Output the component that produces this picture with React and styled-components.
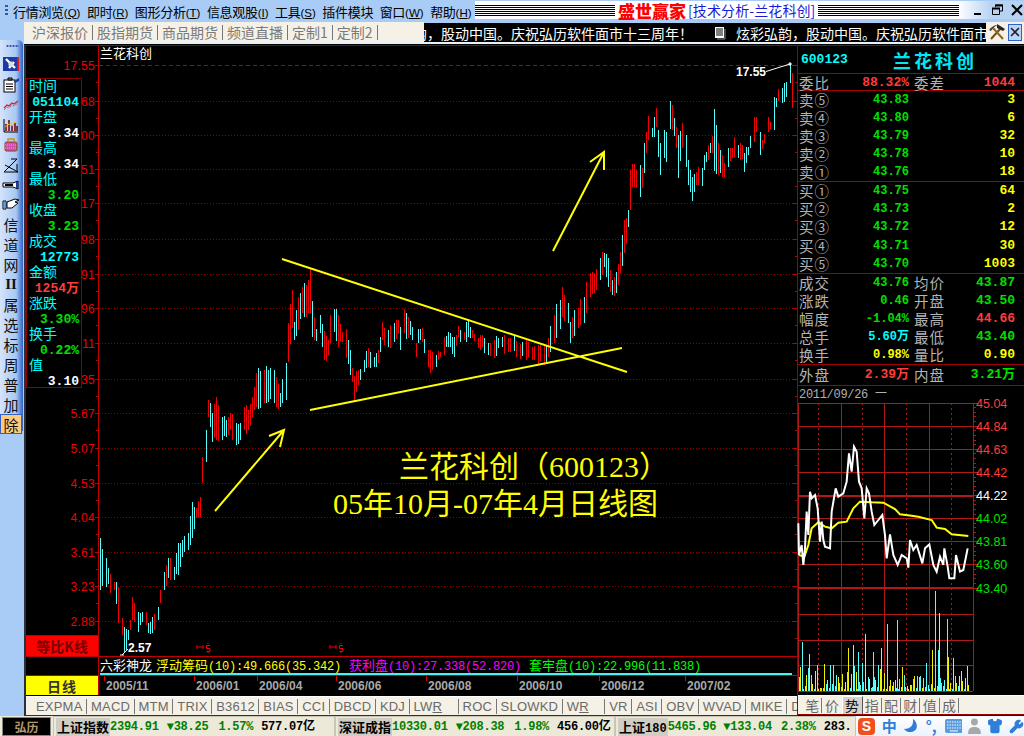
import React from "react";
import styled, { createGlobalStyle } from "styled-components";
import { Shirt, Wrench } from "lucide-react";

const CJK = `"Noto Sans CJK SC", "Liberation Sans", sans-serif`;
const SANS = `"Liberation Sans", "Noto Sans CJK SC", sans-serif`;
const MONO = `"Liberation Mono", "Noto Sans CJK SC", monospace`;
const GRID = "#a00000";

const rnd = (i) => {
  const v = Math.sin(i * 12.9898 + 4.1) * 43758.5453;
  return v - Math.floor(v);
};

// x, top, bottom of the daily bars, read off the chart by eye
const WAY = [
  [100,538,590],[105,558,587],[113,582,590],[118,587,623],[121,618,635],[123,627,653],[127,630,640],[129,620,630],
  [132,597,620],[134,603,622],[137,612,632],[142,612,622],[145,612,625],[148,623,633],[152,617,633],[157,607,620],
  [160,590,603],[163,572,590],[167,558,578],[170,558,580],[173,567,580],[177,543,575],[182,540,557],[187,533,550],
  [191,502,538],[195,508,518],[199,497,517],[202,457,483],[205,430,462],[207,400,417],[212,413,442],[216,397,440],
  [221,417,440],[226,420,437],[230,413,430],[235,423,445],[240,423,440],[243,407,430],[247,410,430],[251,397,417],
  [255,373,407],[263,370,403],[273,370,403],[280,393,407],[285,363,400],[288,323,362],[292,290,328],[294,322,340],
  [298,297,330],[302,287,313],[304,283,317],[308,280,313],[310,268,313],[312,301,337],[316,329,341],[319,315,333],
  [322,324,347],[323,331,360],[327,340,355],[330,315,343],[333,309,332],[338,315,347],[342,332,342],[345,329,358],
  [349,350,375],[351,368,382],[354,376,402],[358,370,385],[363,360,372],[368,348,367],[373,357,367],[378,350,363],
  [382,322,340],[387,330,347],[393,323,342],[397,320,333],[400,327,350],[403,309,333],[407,317,338],[412,327,340],
  [415,343,357],[418,329,343],[422,328,342],[427,350,367],[430,350,373],[435,355,367],[440,352,357],[443,337,355],
  [447,332,347],[454,337,357],[458,326,337],[463,332,340],[467,319,337],[472,330,338],[477,338,348],[482,335,347],
  [487,343,355],[493,340,358],[498,338,348],[510,338,352],[522,342,356],[534,346,360],[546,345,362],[553,315,343],
  [562,287,317],[567,303,323],[570,322,343],[577,308,328],[583,297,323],[589,273,297],[593,273,293],[599,258,280],
  [603,253,267],[607,258,287],[611,280,295],[615,272,293],[619,252,273],[623,220,253],[627,210,227],[629,170,210],
  [632,164,187],[636,170,188],[639,165,197],[642,168,188],[644,143,173],[648,116,140],[651,128,137],[653,117,137],
  [656,108,127],[658,130,157],[660,143,175],[663,130,158],[666,132,162],[669,101,129],[672,105,130],[676,127,148],
  [678,135,178],[682,123,148],[685,135,167],[688,160,185],[692,177,201],[696,172,185],[701,168,186],[703,155,170],
  [707,145,160],[711,136,153],[713,109,171],[717,143,175],[722,155,177],[724,163,177],[727,148,167],[732,148,158],
  [734,137,157],[737,145,158],[742,145,159],[743,153,172],[747,147,155],[750,136,148],[753,117,142],[756,117,132],
  [759,132,155],[762,140,149],[764,134,143],[767,117,132],[770,122,129],[773,97,130],[776,98,107],[778,89,101],
  [781,88,103],[783,83,102],[786,82,97],[789,63,83],[791,73,108],
];

// bars sit on a 2px grid so each one keeps a black gap beside it
const bars = (() => {
  let red = "";
  let cyan = "";
  const add = (x, top, bot, seed) => {
    const d = `M${Math.round(x / 2) * 2 + 0.5} ${Math.round(top)}V${Math.round(bot)}`;
    if (rnd(seed) > 0.48) red += d;
    else cyan += d;
  };
  WAY.forEach(([x, top, bot], i) => {
    const next = WAY[i + 1];
    if (next) {
      const steps = Math.floor((next[0] - x - 0.5) / 3);
      for (let k = 1; k <= steps; k++) {
        const f = k / (steps + 1);
        const seed = i * 7 + k;
        const t = top + (next[1] - top) * f + (rnd(seed + 300) - 0.5) * 8;
        const b = bot + (next[2] - bot) * f + (rnd(seed + 500) - 0.5) * 8;
        add(x + (next[0] - x) * f, t, b, seed + 700);
      }
    }
    add(x, top, bot, i);
  });
  return { red, cyan };
})();

const AXIS = [
  ["17.55", 65], ["68", 101], ["00", 135], ["51", 169], ["17", 203], ["98", 239], ["91", 274], ["96", 308], ["11", 343],
  ["35", 379], ["5.67", 413], ["5.07", 448], ["4.53", 483], ["4.04", 517], ["3.61", 552], ["3.23", 586], ["2.88", 621],
];

const INFO = [
  ["时间", "051104", "#00ffff"], ["开盘", "3.34", "#fff"], ["最高", "3.34", "#fff"], ["最低", "3.20", "#00e000"],
  ["收盘", "3.23", "#00e000"], ["成交", "12773", "#00ffff"], ["金额", "1254万", "#ff3c3c"], ["涨跌", "3.30%", "#00e000"],
  ["换手", "0.22%", "#00e000"], ["值", "3.10", "#fff"],
];

const DATES = [["2005/11", 105], ["2006/01", 195], ["2006/04", 258], ["2006/06", 337], ["2006/08", 427], ["2006/10", 518], ["2006/12", 600], ["2007/02", 686]];
const SELL = [["卖⑤", "43.83", "3"], ["卖④", "43.80", "6"], ["卖③", "43.79", "32"], ["卖②", "43.78", "10"], ["卖①", "43.76", "18"]];
const BUY = [["买①", "43.75", "64"], ["买②", "43.73", "2"], ["买③", "43.72", "12"], ["买④", "43.71", "30"], ["买⑤", "43.70", "1003"]];
const STATS = [
  ["成交", "43.76", "#00e000", "均价", "43.87", "#00e000"],
  ["涨跌", "0.46", "#00e000", "开盘", "43.50", "#00e000"],
  ["幅度", "-1.04%", "#00e000", "最高", "44.66", "#ff3c3c"],
  ["总手", "5.60万", "#00ffff", "最低", "43.40", "#00e000"],
  ["换手", "0.98%", "#ffff00", "量比", "0.90", "#ffff00"],
];
const MENU = [["行情浏览", "Q"], ["即时", "R"], ["图形分析", "T"], ["信息观股", "I"], ["工具", "S"], ["插件模块"], ["窗口", "W"], ["帮助", "H"]];
const TOPTABS = ["沪深报价", "股指期货", "商品期货", "频道直播", "定制1", "定制2"];
const INDICATORS = ["EXPMA", "MACD", "MTM", "TRIX", "B3612", "BIAS", "CCI", "DBCD", "KDJ", "LWR*", "ROC", "SLOWKD", "WR*", "VR", "ASI", "OBV", "WVAD", "MIKE", "D"];
const SIDETABS = ["笔", "价", "势", "指", "配", "财", "值", "成"];
const RAILTEXT = ["信", "道", "网", "II", "属", "选", "标", "周", "普", "加", "除"];

const TICK_LABELS = [
  ["45.04", 403, "#ff3c3c"], ["44.84", 426, "#ff3c3c"], ["44.63", 449, "#ff3c3c"], ["44.42", 472, "#ff3c3c"], ["44.22", 495, "#fff"],
  ["44.02", 518, "#00e000"], ["43.81", 541, "#00e000"], ["43.60", 564, "#00e000"], ["43.40", 588, "#00e000"],
];

const toPts = (list) => list.map(([x, y]) => `${795 + x / 3},${385 + y / 3}`).join(" ");
const PRICE = toPts([[10,415],[12,510],[20,480],[25,540],[30,490],[35,380],[40,450],[45,320],[50,340],[60,330],[68,370],[75,470],[80,410],[85,465],[90,485],[105,490],[110,380],[122,310],[130,335],[145,325],[155,290],[162,205],[170,260],[177,185],[185,200],[192,290],[200,310],[208,400],[215,310],[222,325],[230,380],[238,420],[250,405],[262,390],[270,450],[275,520],[285,448],[295,510],[308,540],[320,510],[335,520],[340,548],[345,465],[355,495],[365,480],[382,535],[390,490],[403,478],[415,540],[425,560],[435,515],[445,540],[448,490],[458,545],[463,580],[478,580],[483,510],[495,560],[505,555],[518,490]]);
const AVERAGE = toPts([[12,510],[28,515],[40,480],[50,430],[70,412],[90,425],[110,430],[130,413],[155,410],[175,370],[195,350],[230,352],[265,353],[300,372],[315,388],[350,392],[370,395],[410,405],[425,428],[450,432],[470,448],[520,453]]);
const SPIKES = [[22,770,0],[42,808,1],[160,790,1],[175,780,1],[190,800,0],[210,748,1],[235,800,0],[258,790,1],[277,718,0],[305,705,0],[420,618,0],[433,685,1],[457,703,0],[412,795,1],[428,795,0],[460,815,1],[475,820,1],[517,843,1]];

const volumes = (() => {
  let cyan = "";
  let yellow = "";
  for (let i = 0; i < 114; i++) {
    const x = 798.5 + i * 1.5;
    const h = 2 + Math.pow(rnd(i + 40), 2.4) * 26;
    const d = `M${Math.round(x) + 0.5} 691V${Math.round(691 - h)}`;
    if (rnd(i + 90) > 0.5) yellow += d;
    else cyan += d;
  }
  SPIKES.forEach(([x, y, c]) => {
    const d = `M${Math.round(795 + x / 3) + 0.5} 691V${Math.round(385 + y / 3)}`;
    if (c) yellow += d;
    else cyan += d;
  });
  return { cyan, yellow };
})();

const GlobalStyle = createGlobalStyle`
  html, body { margin: 0; padding: 0; background: #a8ccf5; }
  * { box-sizing: border-box; }
  #root { width: 1024px; height: 736px; overflow: hidden; }
`;

const Page = styled.div`
  position: relative;
  width: 1024px;
  height: 736px;
  display: flex;
  flex-direction: column;
  background: #a8ccf5;
  font-family: ${CJK};
  overflow: hidden;
`;

/* ---- menu ---- */
const MenuBar = styled.div`
  height: 22px;
  display: flex;
  align-items: center;
  flex: none;
`;
const MenuItems = styled.div`
  width: 475px;
  display: flex;
  align-items: center;
  flex: none;
`;
const Grip = styled.div`
  width: 3px;
  height: 10px;
  margin: 0 5px 2px 5px;
  flex: none;
  background: repeating-linear-gradient(#3a55a0 0 2px, transparent 2px 4px);
`;
const MenuItem = styled.span`
  flex: none;
  font-size: 13px;
  letter-spacing: -0.3px;
  color: #000;
  margin-right: 6.5px;
  white-space: nowrap;
  small {
    font: 11.5px ${SANS};
    letter-spacing: 0;
  }
`;
const TitleBar = styled.div`
  flex: none;
  width: 549px;
  height: 18px;
  margin-top: -2px;
  display: flex;
  align-items: center;
  background: linear-gradient(90deg, #fff 0, #fff 88%, #b8d2f4 94%);
`;
const Stripes = styled.div`
  flex: none;
  width: ${(p) => p.$w}px;
  height: 11px;
  background: repeating-linear-gradient(#000 0 1px, #fff 1px 2px);
`;
const AppName = styled.span`
  flex: none;
  margin-left: 3px;
  font-size: 17px;
  font-weight: 900;
  color: #f00;
`;
const DocName = styled.span`
  flex: none;
  margin: 0 3px 0 2px;
  font-size: 14px;
  letter-spacing: 0.1px;
  color: #1a1ad8;
  white-space: nowrap;
`;
const WindowButtons = styled.div`
  margin-left: auto;
  display: flex;
  gap: 7px;
  padding-right: 1px;
`;

/* ---- body ---- */
const Body = styled.div`
  flex: none;
  height: 694px;
  display: flex;
`;
const Rail = styled.div`
  width: 24px;
  flex: none;
  padding-top: 18px;
`;
const RailStrip = styled.div`
  width: 23px;
  height: 391px;
  border-radius: 0 5px 0 0;
  background: linear-gradient(90deg, #d4e4fb 0, #a8c8f4 70%, #2f62c4 100%);
  display: flex;
  flex-direction: column;
`;
const RailGrip = styled.div`
  height: 10px;
  margin: 4px 4px 0 6px;
  background: radial-gradient(circle, #3a55a0 1px, transparent 1.2px) 0 -3px / 3px 10px repeat-x;
  flex: none;
`;
const RailItem = styled.div`
  height: 20px;
  width: 22px;
  flex: none;
  display: flex;
  align-items: center;
  justify-content: center;
  font-size: 15px;
  line-height: 1;
  color: #111;
  ${(p) => p.$serif && `font: bold 15px "Liberation Serif", serif;`}
  ${(p) => p.$active && `background: #ffc97e; outline: 1px solid #2f62c4; outline-offset: -1px;`}
`;
const RightSide = styled.div`
  flex: 1;
  display: flex;
  flex-direction: column;
  min-width: 0;
`;
const TopRow = styled.div`
  height: 22px;
  flex: none;
  display: flex;
  align-items: flex-start;
  background: linear-gradient(#a8ccf5 0 20px, #e8f0fa 20px);
`;
const TopTabs = styled.div`
  width: 400px;
  height: 20px;
  padding-left: 4px;
  display: flex;
  align-items: center;
  background: #f5f1e6;
`;
const TopTab = styled.span`
  font-size: 14px;
  line-height: 15px;
  color: #7a7a7a;
  padding: 0 4px;
  border-right: 1px solid #777;
  white-space: nowrap;
  font-family: ${CJK};
`;
const Ticker = styled.div`
  width: 562px;
  height: 19px;
  margin-top: 1px;
  background: #000;
  color: #fff;
  display: flex;
  align-items: center;
  overflow: hidden;
  font-size: 14px;
  white-space: nowrap;
`;
const TickerText = styled.span`
  flex: none;
  margin-left: ${(p) => p.$left || 0}px;
`;
const TickerIcon = styled.svg`
  flex: none;
  margin-left: 21px;
`;
const Tools = styled.div`
  flex: 1;
  height: 20px;
  display: flex;
  align-items: center;
  justify-content: space-between;
  padding: 0 2px;
  background: #f5f1e6;
`;
const CloseBox = styled.div`
  width: 14px;
  height: 17px;
  display: flex;
  align-items: center;
  justify-content: center;
  background: #bcd6f6;
  border: 1px solid #2f62c4;
`;

/* ---- frame ---- */
const Frame = styled.div`
  flex: 1;
  display: flex;
  background: #000;
  border-top: 1px solid #000;
  border-left: 1px solid #2a3040;
  min-height: 0;
`;
const ChartCol = styled.div`
  width: 772px;
  flex: none;
  display: flex;
  flex-direction: column;
  border-left: 1px solid ${GRID};
  border-top: 1px solid ${GRID};
  overflow: hidden;
`;
const ChartArea = styled.div`
  position: relative;
  height: 611px;
  flex: none;
  border-bottom: 1px solid #c00000;
  svg {
    display: block;
  }
`;
const AxisLabel = styled.text`
  font: 12px ${SANS};
  letter-spacing: 0.3px;
  fill: #f00000;
  text-anchor: end;
`;
const StockTitle = styled.text`
  font: 13px ${CJK};
  fill: #fff;
`;
const Callout = styled.text`
  font: bold 12px ${SANS};
  fill: #fff;
`;
const Note = styled.text`
  font: 30px "Liberation Serif", ${CJK};
  fill: #ffff00;
`;
const InfoBox = styled.div`
  position: absolute;
  left: 0;
  top: 32px;
  width: 56px;
  height: 310px;
  background: #000;
  border: 1px solid #8c0000;
  padding: 0 2px;
`;
const InfoLabel = styled.div`
  height: 13px;
  font-size: 14px;
  line-height: 13px;
  color: #00ffff;
`;
const InfoValue = styled.div`
  height: 18px;
  padding-top: 4px;
  font: bold 13px/14px ${MONO};
  text-align: right;
  color: ${(p) => p.$color};
  white-space: nowrap;
`;
const RatioCell = styled.div`
  position: absolute;
  left: 0;
  bottom: 0;
  width: 72px;
  height: 21px;
  background: #f00;
  color: #780000;
  font: bold 14px/21px ${CJK};
  text-align: center;
  border-top: 1px solid #c00000;
`;
const IndicatorRow = styled.div`
  height: 19px;
  flex: none;
  display: flex;
  border-bottom: 1px solid #c00000;
`;
const LeftCell = styled.div`
  width: 73px;
  flex: none;
  border-right: 1px solid #c00000;
  ${(p) =>
    p.$yellow &&
    `background: #ff0; color: #333; font-weight: 700; font-size: 14px; letter-spacing: 1px; display:flex; align-items:center; justify-content:center; margin: 0 0 1px 0;`}
`;
const IndicatorLine = styled.div`
  flex: 1;
  margin: 0 5px 0 1px;
  height: 18px;
  display: flex;
  align-items: center;
  border-bottom: 2px solid #48f0f0;
  white-space: nowrap;
  overflow: hidden;
`;
const IndicatorText = styled.span`
  font: 12px/16px ${MONO};
  color: ${(p) => p.$color};
  width: ${(p) => p.$w}px;
  flex: none;
  letter-spacing: -0.2px;
  b {
    font: 13px ${CJK};
    letter-spacing: 0;
  }
`;
const DateRow = styled.div`
  height: 20px;
  flex: none;
  display: flex;
  svg {
    display: block;
  }
`;
const DateLabel = styled.text`
  font: bold 12px ${SANS};
  fill: #a8a8a8;
`;
const TabStrip = styled.div`
  height: 20px;
  flex: none;
  display: flex;
  align-items: center;
  overflow: hidden;
  background: #f5f1e6;
  padding-left: ${(p) => p.$pad || 0}px;
  border-top: 1px solid #fff;
  border-bottom: 1px solid ${GRID};
`;
const IndicatorTab = styled.span`
  flex: none;
  font: 13px/15px ${SANS};
  letter-spacing: 0.2px;
  color: #6a6a6a;
  padding: 0 3.5px 0 4px;
  border-right: 1px solid #777;
  u {
    text-decoration: underline;
    margin-right: ${(p) => (p.$wide ? 12 : 0)}px;
  }
`;

/* ---- right panel ---- */
const SideCol = styled.div`
  flex: 1;
  display: flex;
  flex-direction: column;
  border-left: 1px solid ${GRID};
  border-top: 1px solid ${GRID};
  min-width: 0;
`;
const QuoteHead = styled.div`
  height: 28px;
  flex: none;
  display: flex;
  align-items: center;
  padding-left: 3px;
  border-bottom: 1px solid ${GRID};
`;
const Code = styled.span`
  font: bold 13px ${MONO};
  color: #00ffff;
  width: 92px;
`;
const QuoteName = styled.span`
  font-size: 18px;
  font-weight: 700;
  letter-spacing: 3px;
  color: #00e8f4;
`;
const Section = styled.div`
  flex: none;
  height: ${(p) => p.$h}px;
  border-bottom: 1px solid ${GRID};
  display: flex;
  flex-direction: column;
  justify-content: space-around;
`;
const QuoteRow = styled.div`
  display: grid;
  grid-template-columns: 32px 78px 34px 72px;
  padding-left: 1px;
  align-items: center;
  height: 18px;
`;
const Cap = styled.span`
  font-size: 14.5px;
  line-height: 18px;
  letter-spacing: 1px;
  color: #b4b4b4;
  white-space: nowrap;
  padding-left: ${(p) => p.$pad || 0}px;
`;
const Val = styled.span`
  font: bold ${(p) => p.$size || 12}px/18px ${MONO};
  color: ${(p) => p.$color};
  text-align: right;
  white-space: nowrap;
`;
const DayRow = styled.div`
  height: 17px;
  flex: none;
  padding-left: 1px;
  font: 12px/18px ${MONO};
  letter-spacing: -0.3px;
  color: #b0b0b0;
  white-space: nowrap;
`;
const MiniChart = styled.div`
  height: 292px;
  flex: none;
  svg {
    display: block;
    overflow: visible;
  }
`;
const MiniLabel = styled.text`
  font: 12.5px ${SANS};
`;
const SideTab = styled.span`
  flex: none;
  width: 19.3px;
  height: ${(p) => (p.$active ? 19 : 15)}px;
  display: flex;
  align-items: center;
  justify-content: center;
  font-size: 14px;
  line-height: 15px;
  color: #6a6a6a;
  ${(p) => p.$sep && `border-right: 1px solid #777;`}
  ${(p) => p.$active && `background: #d6d2ca; color: #111; border: 1px solid; border-color: #fff #555 #555 #fff; width: 21px;`}
`;

/* ---- status ---- */
const StatusBar = styled.div`
  height: 20px;
  flex: none;
  display: flex;
  background: #ece9d8;
  padding-left: 2px;
`;
const Brand = styled.div`
  width: 49px;
  margin: 1px 2px 0 0;
  background: #000;
  color: #b09a70;
  border: 1px solid #888;
  font: 700 12px/17px ${CJK};
  text-align: center;
`;
const IndexBlock = styled.div`
  width: ${(p) => p.$w}px;
  flex: none;
  display: flex;
  align-items: center;
  padding-left: 2px;
  border: 1px solid #c8c5b4;
  border-width: 1px 1px 0 1px;
  overflow: hidden;
  white-space: nowrap;
`;
const IndexName = styled.span`
  height: 18px;
  padding: 0 1px;
  background: #d0cdc5;
  color: #000;
  font: 700 13px/18px ${CJK};
  flex: none;
  small {
    font: 700 12px ${MONO};
  }
`;
const Num = styled.span`
  font: bold 12px/18px ${MONO};
  letter-spacing: -0.25px;
  color: ${(p) => (p.$black ? "#000" : "#008000")};
  margin-left: ${(p) => p.$gap || 0}px;
  flex: none;
`;
const Ime = styled.div`
  flex: 1;
  display: flex;
  align-items: center;
  gap: 6px;
  padding-left: 2px;
  background: linear-gradient(#fff, #eaf2fc);
  overflow: hidden;
`;
const ImeLogo = styled.span`
  width: 17px;
  height: 17px;
  border-radius: 4px;
  background: #f0501e;
  color: #fff;
  font: 900 14px/17px ${SANS};
  text-align: center;
  margin-right: 1px;
`;
const ImeText = styled.span`
  width: 15px;
  text-align: center;
  font-size: 15px;
  font-weight: 700;
  line-height: 18px;
  color: #2f7ed8;
`;

const RailIcon = ({ n }) => {
  const icons = [
    <g key="0"><rect x="1" y="1" width="16" height="14" fill="#1c3aa8" /><rect x="15" y="1" width="2" height="14" fill="#e01818" /><path d="M4 3l9 9M7 12l5-6" stroke="#fff" strokeWidth="2.4" /><circle cx="9" cy="8" r="2.6" fill="#ddd" /></g>,
    <g key="1"><rect x="2" y="4" width="11" height="12" fill="#fff" stroke="#000" /><path d="M4 8h7M4 10.5h7M4 13h7" stroke="#000" /><path d="M6 4V2h4v2z" fill="#888" stroke="#000" /><path d="M12 5l5-3v3l-4 2z" fill="#1c3aa8" /></g>,
    <g key="2"><path d="M2 12l3-3 2 1 3-3 2 1 4-3" stroke="#e01818" strokeWidth="1.2" fill="none" /><path d="M2 14l3-3 2 1 3-3 2 1 4-3" stroke="#666" strokeDasharray="1 1" fill="none" /></g>,
    <g key="3"><path d="M2 3v13h14" stroke="#000" fill="none" /><path d="M4 15V8M7 15V4M10 15V9M13 15V6M15 15V10" stroke="#7a1010" strokeWidth="1.6" /><path d="M3 11l4-3 3 2 3-4 3 3" stroke="#e8c020" fill="none" /></g>,
    <g key="4"><rect x="3" y="6" width="12" height="9" rx="1.5" fill="#d050b0" stroke="#7a4a00" /><path d="M6 6V3h6v3" fill="none" stroke="#c89020" strokeWidth="1.5" /><path d="M3 9h12M3 12h12" stroke="#e8c020" strokeDasharray="1 1" /></g>,
    <g key="5"><path d="M2 16L15 3l-6 0M15 3v0M3 9l13 7H2M15 8v8" stroke="#000" fill="none" /></g>,
    <g key="6"><path d="M1 7h10l5-2v8l-5-2H1z" fill="#fff" stroke="#000" /><path d="M3 9h8" stroke="#000" strokeWidth="2" /><path d="M15 6v6" stroke="#1c3aa8" strokeWidth="2" /></g>,
    <g key="7"><path d="M1 5h3v8H1zM5 6l8-3 4 1-4 2 3 1-6 5H5z" fill="#fff" stroke="#000" /><path d="M2 6v6" stroke="#2f7ed8" strokeWidth="1.5" /></g>,
  ];
  return <svg width="18" height="17" viewBox="0 0 18 17">{icons[n]}</svg>;
};

const App = () => (
  <Page>
    <GlobalStyle />
    <MenuBar>
      <MenuItems>
        <Grip />
        {MENU.map(([name, key]) => (
          <MenuItem key={name}>
            {name}
            {key && (
              <small>
                (<u>{key}</u>)
              </small>
            )}
          </MenuItem>
        ))}
      </MenuItems>
      <TitleBar>
        <Stripes $w={140} />
        <AppName>盛世赢家</AppName>
        <DocName>[技术分析-兰花科创]</DocName>
        <Stripes $w={141} />
        <WindowButtons>
          <svg width="11" height="12" viewBox="0 0 11 12"><path d="M1 10h7" stroke="#000" strokeWidth="2" /></svg>
          <svg width="13" height="12" viewBox="0 0 13 12"><path d="M4.5 3V1h7v6H9M1.5 4.500h7v6h-7z" fill="none" stroke="#000" /><path d="M4 1.500h8M1 4.500h8" stroke="#000" strokeWidth="2" /></svg>
          <svg width="12" height="12" viewBox="0 0 12 12"><path d="M1 1l10 10M11 1L1 11" stroke="#000" strokeWidth="2" /></svg>
        </WindowButtons>
      </TitleBar>
    </MenuBar>

    <Body>
      <Rail>
        <RailStrip>
          <RailGrip />
          {[0, 1, 2, 3, 4, 5, 6, 7].map((n) => (
            <RailItem key={n}>
              <RailIcon n={n} />
            </RailItem>
          ))}
          {RAILTEXT.map((t) => (
            <RailItem key={t} $serif={t === "II"} $active={t === "除"}>
              {t}
            </RailItem>
          ))}
        </RailStrip>
      </Rail>

      <RightSide>
        <TopRow>
          <TopTabs>
            {TOPTABS.map((t) => (
              <TopTab key={t}>{t}</TopTab>
            ))}
          </TopTabs>
          <Ticker>
            <TickerText $left={-11}>韵，股动中国。庆祝弘历软件面市十三周年！</TickerText>
            <TickerIcon width="12" height="14" viewBox="0 0 12 14">
              <path d="M1 1h9v11H1z" fill="#fff" />
              <path d="M2 3h7M2 5h7M2 7h7M2 9h7" stroke="#000" />
              <path d="M11 3v10H3" stroke="#888" fill="none" />
            </TickerIcon>
            <TickerText $left={10}>炫彩弘韵，股动中国。庆祝弘历软件面市</TickerText>
          </Ticker>
          <Tools>
            <svg width="18" height="18" viewBox="0 0 18 18">
              <path d="M3 16L13 5" stroke="#7a4a10" strokeWidth="2" />
              <path d="M15 16L5 5" stroke="#8a6a20" strokeWidth="2" />
              <path d="M9 1l8 5-2 2-6-3z" fill="#222" />
              <path d="M1 7c2-3 5-5 9-5-3 1-5 3-7 6z" fill="#444" />
            </svg>
            <CloseBox>
              <svg width="10" height="10" viewBox="0 0 10 10"><path d="M1 1l8 8M9 1L1 9" stroke="#223" strokeWidth="1.6" /></svg>
            </CloseBox>
          </Tools>
        </TopRow>

        <Frame>
          <ChartCol>
            <ChartArea>
              <svg width="771" height="610" viewBox="26 46 771 610">
                <g shapeRendering="crispEdges">
                  {AXIS.map(([, y], i) => (
                    <path key={y} d={`M99 ${y + 0.5}H796`} stroke={i === 0 ? "#b00000" : "#8c0000"} strokeDasharray={i === 0 ? "4 3" : "1 2"} />
                  ))}
                  <path d="M98.500 46V656" stroke="#c00000" />
                  {AXIS.map(([, y]) => (
                    <path key={y} d={`M95 ${y + 0.5}H98M96 ${y + 17.5}H98M793 ${y + 0.5}H797M795 ${y + 17.5}H797`} stroke="#c00000" />
                  ))}
                  <path d={bars.red} stroke="#f00000" fill="none" />
                  <path d={bars.cyan} stroke="#54fcfc" fill="none" />
                </g>
                {AXIS.map(([label, y]) => (
                  <AxisLabel key={y} x="95" y={y + 4.5}>
                    {label}
                  </AxisLabel>
                ))}
                <StockTitle x="100" y="58">兰花科创</StockTitle>
                <g stroke="#ffff00" strokeWidth="2" fill="none">
                  <path d="M282 259L627 372M310 410L622 348" />
                  <path d="M215 511L284 430M269 436L284 430L280 447" />
                  <path d="M553 251L604 152M590 162L604 152V170" />
                </g>
                <Note x="399" y="477">兰花科创（600123）</Note>
                <Note x="333" y="514">05年10月-07年4月日线图</Note>
                <path d="M766 71.500L790 64M122 655L128 649" stroke="#fff" fill="none" />
                <path d="M788 64H792M790 62V66M120 655H124" stroke="#fff" fill="none" />
                <Callout x="736" y="76">17.55</Callout>
                <Callout x="128" y="652">2.57</Callout>
                {[197, 330].map((x) => (
                  <g key={x} stroke="#f00000" fill="none">
                    <path d={`M${x} 645v4M${x + 6} 645v4M${x} 647h6`} />
                    <path d={`M${x + 13} 645.500h-3.500v3h3.500v3h-3.500M${x + 11} 643v1M${x + 11} 652v1`} />
                  </g>
                ))}
              </svg>
              <InfoBox>
                {INFO.map(([label, value, color]) => (
                  <div key={label}>
                    <InfoLabel>{label}</InfoLabel>
                    <InfoValue $color={color}>{value}</InfoValue>
                  </div>
                ))}
              </InfoBox>
              <RatioCell>等比K线</RatioCell>
            </ChartArea>
            <IndicatorRow>
              <LeftCell />
              <IndicatorLine>
                <IndicatorText $color="#fff" $w={56}><b>六彩神龙</b></IndicatorText>
                <IndicatorText $color="#ffff00" $w={193}><b>浮动筹码</b>(10):49.666(35.342)</IndicatorText>
                <IndicatorText $color="#ff00ff" $w={180}><b>获利盘</b>(10):27.338(52.820)</IndicatorText>
                <IndicatorText $color="#00ff00" $w={180}><b>套牢盘</b>(10):22.996(11.838)</IndicatorText>
              </IndicatorLine>
            </IndicatorRow>
            <DateRow>
              <LeftCell $yellow>日线</LeftCell>
              <svg width="698" height="20" viewBox="99 676 698 20">
                {DATES.map(([label, x]) => (
                  <g key={label}>
                    <path d={`M${x - 0.5} 676v5`} stroke="#e00000" shapeRendering="crispEdges" />
                    <DateLabel x={x + 1} y="690">{label}</DateLabel>
                  </g>
                ))}
              </svg>
            </DateRow>
            <TabStrip $pad={6}>
              {INDICATORS.map((t) => {
                const wide = t.endsWith("*");
                const name = t.replace("*", "");
                return (
                  <IndicatorTab key={t} $wide={wide}>
                    {wide ? (
                      <>
                        {name.slice(0, -1)}
                        <u>{name.slice(-1)}</u>
                      </>
                    ) : (
                      name
                    )}
                  </IndicatorTab>
                );
              })}
            </TabStrip>
          </ChartCol>

          <SideCol>
            <QuoteHead>
              <Code>600123</Code>
              <QuoteName>兰花科创</QuoteName>
            </QuoteHead>
            <Section $h={17}>
              <QuoteRow>
                <Cap>委比</Cap>
                <Val $size={13} $color="#ff3c3c">88.32%</Val>
                <Cap $pad={5}>委差</Cap>
                <Val $size={13} $color="#ff3c3c">1044</Val>
              </QuoteRow>
            </Section>
            <Section $h={91}>
              {SELL.map(([cap, price, vol]) => (
                <QuoteRow key={cap}>
                  <Cap>{cap}</Cap>
                  <Val $color="#00e000">{price}</Val>
                  <span />
                  <Val $size={13} $color="#ffff00">{vol}</Val>
                </QuoteRow>
              ))}
            </Section>
            <Section $h={92}>
              {BUY.map(([cap, price, vol]) => (
                <QuoteRow key={cap}>
                  <Cap>{cap}</Cap>
                  <Val $color="#00e000">{price}</Val>
                  <span />
                  <Val $size={13} $color="#ffff00">{vol}</Val>
                </QuoteRow>
              ))}
            </Section>
            <Section $h={91}>
              {STATS.map(([a, b, c, d, e, f]) => (
                <QuoteRow key={a}>
                  <Cap>{a}</Cap>
                  <Val $color={c}>{b}</Val>
                  <Cap $pad={5}>{d}</Cap>
                  <Val $size={13} $color={f}>{e}</Val>
                </QuoteRow>
              ))}
            </Section>
            <Section $h={21}>
              <QuoteRow>
                <Cap>外盘</Cap>
                <Val $size={13} $color="#ff3c3c">2.39万</Val>
                <Cap $pad={5}>内盘</Cap>
                <Val $size={13} $color="#00e000">3.21万</Val>
              </QuoteRow>
            </Section>
            <DayRow>2011/09/26 一</DayRow>
            <MiniChart>
              <svg width="226" height="292" viewBox="798 403 226 292">
                <g shapeRendering="crispEdges" stroke="#b01818" fill="none">
                  {[403, 426, 449, 472, 518, 541, 564, 614, 640, 665].map((y) => (
                    <path key={y} d={`M798 ${y + 0.5}H973`} />
                  ))}
                  <path d="M798 495.500H973M798 588H973" strokeWidth="2" />
                  <path d="M798 691.500H973M798.500 403V691M973.500 403V691M841.500 403V691M884.500 403V691M929.500 403V691" />
                  <path d="M818.500 403V691M862.500 403V691M906.500 403V691M951.500 403V691" strokeDasharray="2 3" />
                  {Array.from({ length: 41 }, (_, i) => (
                    <path key={i} d={`M974 ${403 + i * 4.625}h${i % 5 === 0 ? 5 : 2}`} />
                  ))}
                </g>
                <polyline points={AVERAGE} fill="none" stroke="#ffff00" strokeWidth="2" />
                <polyline points={PRICE} fill="none" stroke="#fff" strokeWidth="2" />
                <g shapeRendering="crispEdges" fill="none">
                  <path d={volumes.yellow} stroke="#f0f000" />
                  <path d={volumes.cyan} stroke="#54fcfc" />
                </g>
                {TICK_LABELS.map(([label, y, color]) => (
                  <MiniLabel key={label} x="976" y={y + 5} fill={color}>
                    {label}
                  </MiniLabel>
                ))}
              </svg>
            </MiniChart>
            <TabStrip $pad={5}>
              {SIDETABS.map((t, i) => (
                <SideTab key={t} $active={t === "势"} $sep={[0, 3, 4, 5, 6, 7].includes(i)}>
                  {t}
                </SideTab>
              ))}
            </TabStrip>
          </SideCol>
        </Frame>
      </RightSide>
    </Body>

    <StatusBar>
      <Brand>弘历</Brand>
      <IndexBlock $w={282}>
        <IndexName>上证指数</IndexName>
        <Num>2394.91</Num>
        <Num $gap={8}>▼38.25</Num>
        <Num $gap={10}>1.57%</Num>
        <Num $gap={8} $black>577.07亿</Num>
      </IndexBlock>
      <IndexBlock $w={280}>
        <IndexName>深证成指</IndexName>
        <Num>10330.01</Num>
        <Num $gap={8}>▼208.38</Num>
        <Num $gap={10}>1.98%</Num>
        <Num $gap={8} $black>456.00亿</Num>
      </IndexBlock>
      <IndexBlock $w={241}>
        <IndexName>上证<small>180</small></IndexName>
        <Num>5465.96</Num>
        <Num $gap={7}>▼133.04</Num>
        <Num $gap={9}>2.38%</Num>
        <Num $gap={8} $black>283.</Num>
      </IndexBlock>
      <Ime>
        <ImeLogo>S</ImeLogo>
        <ImeText>中</ImeText>
        <svg width="15" height="16" viewBox="0 0 15 16"><path d="M10 1c1 6-2 10-9 10 3 5 13 4 13-3 0-3-2-6-4-7z" fill="#2f7ed8" /></svg>
        <ImeText>°,</ImeText>
        <svg width="18" height="14" viewBox="0 0 18 14"><rect width="18" height="14" rx="2" fill="#5a9ae0" /><path d="M2 3h14M2 6h14M2 9h14" stroke="#fff" strokeDasharray="1.500 1" /><path d="M5 12h8" stroke="#fff" /></svg>
        <svg width="13" height="16" viewBox="0 0 13 16"><circle cx="6.500" cy="4" r="3.500" fill="#a8a8a8" /><path d="M0 16c0-6 3-7 6.500-7s6.500 1 6.500 7z" fill="#a8a8a8" /></svg>
        <Shirt size={16} color="#2f7ed8" fill="#2f7ed8" />
        <Wrench size={15} color="#2f7ed8" fill="#2f7ed8" />
      </Ime>
    </StatusBar>
  </Page>
);

export default App;
